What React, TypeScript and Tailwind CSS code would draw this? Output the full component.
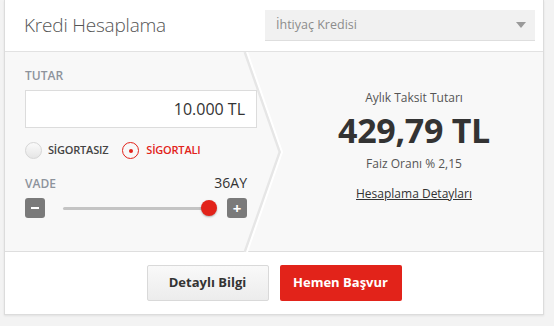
import React, { useState } from 'react';

const font = { fontFamily: '"Open Sans", "Liberation Sans", sans-serif' };

export default function App() {
  const [insured, setInsured] = useState(true);
  const [months, setMonths] = useState(36);

  const pct = ((months - 3) / (36 - 3)) * 100;

  return (
    <div className="w-[554px] h-[326px] bg-[#f3f3f3] overflow-hidden" style={font}>
      <div className="ml-[4px] w-[540px] h-[315px] bg-white border-x border-b border-[#dcdcdc] shadow-[0_1px_2px_rgba(0,0,0,0.08)] flex flex-col">
        {/* header */}
        <div className="h-[52px] shrink-0 flex items-center justify-between border-b border-[#e2e2e2]">
          <h1 className="pl-[19px] text-[19px] font-light text-[#555] tracking-[-0.2px]">Kredi Hesaplama</h1>
          <div className="mr-[8px] w-[270px] h-[31px] bg-[#f1f1f1] border-b border-[#dedede] flex items-center justify-between pl-[11px] pr-[9px]">
            <span className="text-[12.5px] text-[#8c8c8c]">İhtiyaç Kredisi</span>
            <svg width="10" height="6" viewBox="0 0 10 6">
              <path d="M0 0h10L5 6z" fill="#9a9a9a" />
            </svg>
          </div>
        </div>

        {/* body */}
        <div className="relative h-[200px] shrink-0 bg-[#f8f8f8] flex border-b border-[#dedede]">
          <svg className="absolute left-[238px] top-0" width="44" height="200" viewBox="0 0 44 200">
            <polyline points="2,0 37,100 2,200" fill="none" stroke="#e6e6e6" strokeWidth="3" />
            <polyline points="4,0 39,100 4,200" fill="none" stroke="#ffffff" strokeWidth="2" />
          </svg>

          <div className="w-[252px] shrink-0 pl-[20px] pt-[15px]">
            <div className="text-[12px] font-semibold text-[#8d939c]">TUTAR</div>
            <div className="mt-[5px] w-[232px] h-[38px] bg-white border border-[#dcdcdc] flex items-center justify-end pr-[11px]">
              <span className="text-[16px] text-[#333]">10.000 TL</span>
            </div>

            <div className="mt-[14px] flex items-center gap-[14px]">
              <button onClick={() => setInsured(false)} className="flex items-center gap-[6px]">
                <span
                  className={
                    insured
                      ? 'w-[17px] h-[17px] rounded-full border border-[#d6d6d6] bg-gradient-to-b from-[#fafafa] to-[#e6e6e6]'
                      : 'w-[17px] h-[17px] rounded-full border border-[#e2231a] flex items-center justify-center'
                  }
                >
                  {!insured && <span className="w-[4px] h-[4px] rounded-full bg-[#e2231a]" />}
                </span>
                <span className={insured ? 'text-[11px] font-semibold text-[#444] tracking-[-0.2px]' : 'text-[11px] font-semibold text-[#e2231a] tracking-[-0.2px]'}>SİGORTASIZ</span>
              </button>
              <button onClick={() => setInsured(true)} className="flex items-center gap-[7px]">
                <span
                  className={
                    insured
                      ? 'w-[17px] h-[17px] rounded-full border border-[#e2231a] flex items-center justify-center'
                      : 'w-[17px] h-[17px] rounded-full border border-[#d6d6d6] bg-gradient-to-b from-[#fafafa] to-[#e6e6e6]'
                  }
                >
                  {insured && <span className="w-[4px] h-[4px] rounded-full bg-[#e2231a]" />}
                </span>
                <span className={insured ? 'text-[11px] font-semibold text-[#e2231a] tracking-[-0.2px]' : 'text-[11px] font-semibold text-[#444] tracking-[-0.2px]'}>SİGORTALI</span>
              </button>
            </div>

            <div className="mt-[13px] w-[222px] flex items-end justify-between">
              <span className="text-[12px] font-semibold text-[#8d939c]">VADE</span>
              <span className="text-[14px] text-[#333]">{months}AY</span>
            </div>

            <div className="mt-[5px] w-[222px] flex items-center">
              <button
                onClick={() => setMonths(Math.max(3, months - 3))}
                className="w-[20px] h-[20px] rounded-[3px] bg-[#7a7a7a] flex items-center justify-center"
              >
                <span className="w-[8px] h-[2px] bg-white" />
              </button>
              <div className="relative flex-1 mx-[18px] h-[16px] flex items-center">
                <div className="w-full h-[3px] rounded-full bg-[#c4c4c4]" />
                <span
                  className="absolute top-0 w-[16px] h-[16px] -ml-[8px] rounded-full bg-[#e2231a] shadow-[0_1px_2px_rgba(0,0,0,0.3)]"
                  style={{ left: `${pct}%` }}
                />
              </div>
              <button
                onClick={() => setMonths(Math.min(36, months + 3))}
                className="w-[20px] h-[20px] rounded-[3px] bg-[#7a7a7a] flex items-center justify-center text-white text-[15px] font-bold leading-none"
              >
                +
              </button>
            </div>
          </div>

          <div className="flex-1 flex flex-col items-center pt-[37px] pl-[28px]">
            <div className="text-[12px] text-[#555]">Aylık Taksit Tutarı</div>
            <div className="mt-[3px] text-[34px] font-bold text-[#333] leading-[40px] tracking-[-0.3px]">429,79 TL</div>
            <div className="mt-[5px] text-[12px] text-[#555]">Faiz Oranı % 2,15</div>
            <a href="#" className="mt-[12px] text-[12px] text-[#333] underline">Hesaplama Detayları</a>
          </div>
        </div>

        {/* footer */}
        <div className="flex-1 flex items-center justify-center gap-[11px]">
          <button className="w-[122px] h-[36px] rounded-[2px] bg-gradient-to-b from-[#f9f9f9] to-[#ececec] border border-[#d9d9d9] text-[13px] font-bold text-[#333]">
            Detaylı Bilgi
          </button>
          <button className="w-[122px] h-[36px] rounded-[2px] bg-[#e2231a] text-[13px] font-bold text-white">
            Hemen Başvur
          </button>
        </div>
      </div>
    </div>
  );
}
